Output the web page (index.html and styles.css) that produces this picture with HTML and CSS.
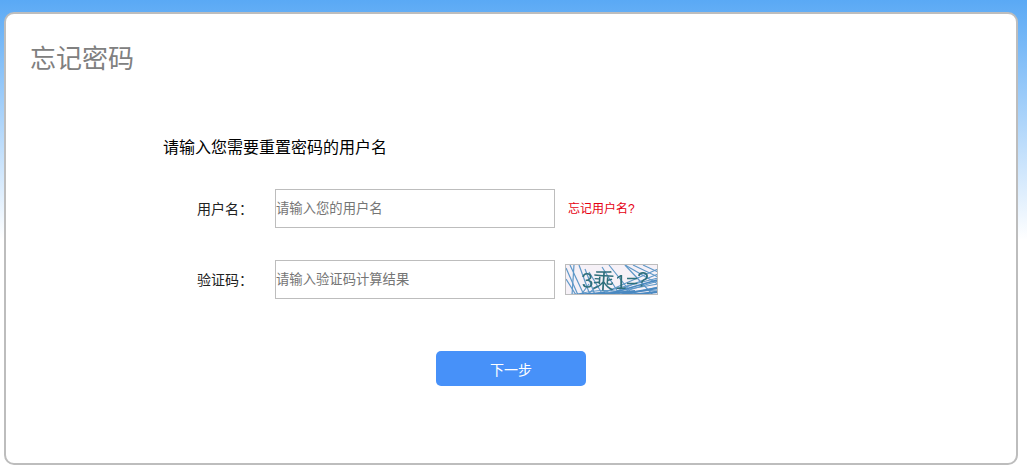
FILE: index.html
```html
<!DOCTYPE html>
<html lang="zh-CN">
<head>
<meta charset="utf-8">
<title>忘记密码</title>
<link rel="stylesheet" href="styles.css">
</head>
<body>
<main class="card">
  <h1 class="title">忘记密码</h1>
  <form class="form">
    <p class="lead">请输入您需要重置密码的用户名</p>
    <div class="row row-user">
      <label class="label" for="user">用户名：</label>
      <input class="input" id="user" type="text" placeholder="请输入您的用户名">
      <a class="link" href="#">忘记用户名?</a>
    </div>
    <div class="row row-code">
      <label class="label" for="code">验证码：</label>
      <input class="input" id="code" type="text" placeholder="请输入验证码计算结果">
      <svg class="captcha" width="93" height="31" viewBox="0 0 93 31" xmlns="http://www.w3.org/2000/svg">
        <defs>
          <filter id="soft" x="0" y="0" width="100%" height="100%">
            <feGaussianBlur stdDeviation="0.5"/>
          </filter>
          <clipPath id="inner"><rect x="1" y="1" width="91" height="29"/></clipPath>
        </defs>
        <rect x="0.5" y="0.5" width="92" height="30" fill="#f6f1f7" stroke="#bdbdbd"/>
        <g clip-path="url(#inner)">
          <g filter="url(#soft)">
            <g fill="none" stroke="#5f98c8" stroke-width="1.2">
              <path d="M1 4 L13 31"/><path d="M5 1 L19 31"/><path d="M9 1 L7 31"/><path d="M14 1 L25 31"/>
              <path d="M1 15 L11 31"/><path d="M20 5 L30 31"/><path d="M24 8 L38 31"/>
              <path d="M37 3 L55 31"/><path d="M44 1 L68 31"/><path d="M60 1 L88 31"/>
              <path d="M34 31 L93 5"/><path d="M42 31 L93 10"/><path d="M26 31 L93 14"/><path d="M48 31 L93 17"/>
              <path d="M36 30 L93 20"/><path d="M58 31 L93 23"/><path d="M44 29 L93 26"/><path d="M70 31 L93 27"/>
              <path d="M68 1 L93 13"/><path d="M78 1 L93 8"/><path d="M60 1 L93 20"/>
              <path d="M10 31 Q40 22 70 31"/><path d="M20 31 Q50 25 80 31"/>
              <path d="M16 31 L24 20"/><path d="M22 31 L32 22"/>
            </g>
            <g fill="none" stroke="#4a88c0" stroke-width="1.8">
              <path d="M30 31 L70 27"/><path d="M52 31 L93 24"/><path d="M64 31 L93 28"/>
              <path d="M40 31 L92 16"/><path d="M5 31 L40 29"/>
            </g>
            <g class="captcha-text">
              <text x="17" y="24" transform="rotate(-4 17 24)">3</text>
              <text class="captcha-big" x="27" y="24" transform="rotate(4 27 24)">乘</text>
              <text x="50" y="25">1</text>
              <text x="61" y="24">=</text>
              <text x="71" y="22" transform="rotate(6 71 22)">?</text>
            </g>
          </g>
        </g>
      </svg>
    </div>
    <div class="actions">
      <button class="next" type="button">下一步</button>
    </div>
  </form>
</main>
</body>
</html>
```

FILE: styles.css
```css
* {
  box-sizing: border-box;
}

html,
body {
  height: 470px;
  margin: 0;
}

body {
  padding: 12px 9px 5px 4px;
  overflow: hidden;
  background: linear-gradient(to bottom, #5aa9f5 0, #ffffff 240px);
  font-family: "Liberation Sans", "Noto Sans CJK SC", sans-serif;
}

.card {
  height: 453px;
  padding: 27px 25px 0 24px;
  border: 2px solid #bdbdbd;
  border-radius: 10px;
  background: #ffffff;
}

.title {
  margin: 0;
  font-size: 26px;
  line-height: 36px;
  font-weight: 400;
  color: #808080;
}

.form {
  padding: 59px 0 0 133px;
}

.lead {
  margin: 0 0 29px;
  font-size: 16px;
  line-height: 24px;
  color: #000000;
}

.row {
  display: flex;
  align-items: center;
  height: 39px;
  margin-bottom: 32px;
}

.label {
  width: 112px;
  padding-left: 34px;
  padding-bottom: 2px;
  font-size: 14px;
  color: #222222;
}

.input {
  width: 280px;
  height: 39px;
  padding: 0;
  border: 1px solid #bdbdbd;
  background: #ffffff;
  font-family: inherit;
  font-size: 13.33px;
  outline: none;
}

.input::placeholder {
  color: #757575;
}

.link {
  margin-left: 13px;
  padding-bottom: 2px;
  font-size: 12px;
  color: #e60012;
  text-decoration: none;
}

.captcha {
  display: block;
  margin-left: 10px;
}

.captcha-text {
  font-family: "Liberation Sans", "Noto Sans CJK SC", sans-serif;
  font-size: 21px;
  fill: #2f6f7c;
}

.captcha-big {
  font-size: 22px;
}

.actions {
  padding: 20px 0 0 273px;
}

.next {
  display: block;
  width: 150px;
  height: 35px;
  padding: 0;
  border: 0;
  border-radius: 5px;
  background: #4791f9;
  color: #ffffff;
  font-family: inherit;
  font-size: 14px;
}
```
